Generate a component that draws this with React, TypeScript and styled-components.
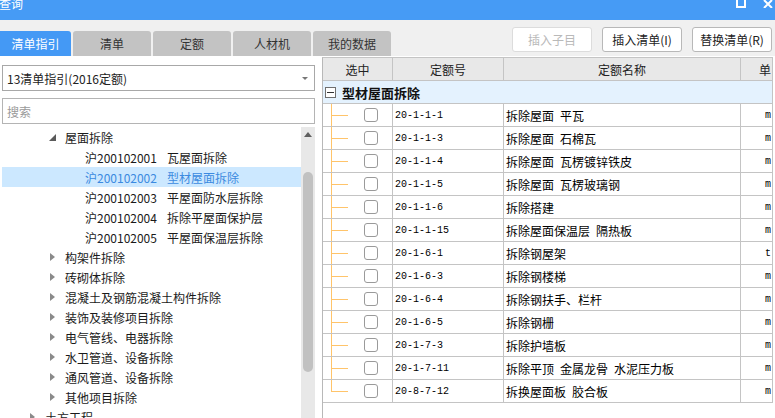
import styled, { createGlobalStyle } from 'styled-components';

const GlobalStyle = createGlobalStyle`
	html, body {
		margin: 0;
		padding: 0;
		background: #f0f0f0;
	}
	body {
		font-family: 'Noto Sans CJK SC', 'Noto Sans', sans-serif;
		color: #1a1a1a;
	}
`;

const TABS = ['清单指引', '清单', '定额', '人材机', '我的数据'];

type TreeNode = {
	level: number;
	code?: string;
	label: string;
	toggle?: 'open' | 'closed';
	selected?: boolean;
};

const TREE: TreeNode[] = [
	{ level: 2, label: '屋面拆除', toggle: 'open' },
	{ level: 3, code: '沪200102001', label: '瓦屋面拆除' },
	{ level: 3, code: '沪200102002', label: '型材屋面拆除', selected: true },
	{ level: 3, code: '沪200102003', label: '平屋面防水层拆除' },
	{ level: 3, code: '沪200102004', label: '拆除平屋面保护层' },
	{ level: 3, code: '沪200102005', label: '平屋面保温层拆除' },
	{ level: 2, label: '构架件拆除', toggle: 'closed' },
	{ level: 2, label: '砖砌体拆除', toggle: 'closed' },
	{ level: 2, label: '混凝土及钢筋混凝土构件拆除', toggle: 'closed' },
	{ level: 2, label: '装饰及装修项目拆除', toggle: 'closed' },
	{ level: 2, label: '电气管线、电器拆除', toggle: 'closed' },
	{ level: 2, label: '水卫管道、设备拆除', toggle: 'closed' },
	{ level: 2, label: '通风管道、设备拆除', toggle: 'closed' },
	{ level: 2, label: '其他项目拆除', toggle: 'closed' },
	{ level: 1, label: '土方工程', toggle: 'closed' },
];

const ROWS: [string, string, string][] = [
	['20-1-1-1', '拆除屋面\u2002平瓦', 'm'],
	['20-1-1-3', '拆除屋面\u2002石棉瓦', 'm'],
	['20-1-1-4', '拆除屋面\u2002瓦楞镀锌铁皮', 'm'],
	['20-1-1-5', '拆除屋面\u2002瓦楞玻璃钢', 'm'],
	['20-1-1-6', '拆除搭建', 'm'],
	['20-1-1-15', '拆除屋面保温层\u2002隔热板', 'm'],
	['20-1-6-1', '拆除钢屋架', 't'],
	['20-1-6-3', '拆除钢楼梯', 'm'],
	['20-1-6-4', '拆除钢扶手、栏杆', 'm'],
	['20-1-6-5', '拆除钢栅', 'm'],
	['20-1-7-3', '拆除护墙板', 'm'],
	['20-1-7-11', '拆除平顶\u2002金属龙骨\u2002水泥压力板', 'm'],
	['20-8-7-12', '拆换屋面板\u2002胶合板', 'm'],
];

function OpenArrow() {
	return (
		<svg width="7" height="7" viewBox="0 0 7 7">
			<path d="M7 0 L7 7 L0 7 Z" fill="#5a5a5a" />
		</svg>
	);
}

function ClosedArrow() {
	return (
		<svg width="5" height="8" viewBox="0 0 5 8">
			<path d="M0 0 L5 4 L0 8 Z" fill="#8a8a8a" />
		</svg>
	);
}

// orange tree connector in the first column
function Connector({ last }: { last: boolean }) {
	return (
		<svg width="26" height="22" viewBox="0 0 26 22">
			<rect x="8" y="0" width="1" height={last ? 12 : 22} fill="#ffc46a" />
			<rect x="8" y="11" width="17" height="1" fill="#ffc46a" />
		</svg>
	);
}

export default function App() {
	return (
		<Page>
			<GlobalStyle />
			<TitleBar>
				<Title>查询</Title>
				<WindowIcons>
					<svg width="10" height="8" viewBox="0 0 10 8">
						<path d="M1 -1 H9 V7 H1 Z" fill="none" stroke="#fff" strokeWidth="2" />
					</svg>
					<svg width="10" height="8" viewBox="0 0 10 8">
						<path d="M1 0 L9 8 M9 0 L1 8" stroke="#fff" strokeWidth="2" />
					</svg>
				</WindowIcons>
			</TitleBar>

			<Toolbar>
				<Tabs>
					{TABS.map((tab, index) => (
						<Tab key={tab} $active={index === 0} $first={index === 0}>
							{tab}
						</Tab>
					))}
				</Tabs>
				<Actions>
					<ActionButton disabled>插入子目</ActionButton>
					<ActionButton>插入清单(I)</ActionButton>
					<ActionButton>替换清单(R)</ActionButton>
				</Actions>
			</Toolbar>

			<Main>
				<LeftPanel>
					<Combo>
						<span>13清单指引(2016定额)</span>
						<svg width="6" height="3" viewBox="0 0 6 3">
							<path d="M0 0 H6 L3 3 Z" fill="#777" />
						</svg>
					</Combo>
					<Search>搜索</Search>
					<TreeArea>
						<TreeList>
							{TREE.map((node, index) => (
								<TreeRow key={index} $level={node.level} $selected={node.selected}>
									<Toggle>
										{node.toggle === 'open' && <OpenArrow />}
										{node.toggle === 'closed' && <ClosedArrow />}
									</Toggle>
									{node.code && <NodeCode>{node.code}</NodeCode>}
									<span>{node.label}</span>
								</TreeRow>
							))}
						</TreeList>
						<Scrollbar>
							<ScrollArrow>
								<svg width="8" height="5" viewBox="0 0 8 5">
									<path d="M0 5 L4 0 L8 5 Z" fill="#606060" />
								</svg>
							</ScrollArrow>
							<ScrollThumb />
						</Scrollbar>
					</TreeArea>
				</LeftPanel>

				<Table>
					<HeaderRow>
						<HeaderCell>选中</HeaderCell>
						<HeaderCell>定额号</HeaderCell>
						<HeaderCell>定额名称</HeaderCell>
						<HeaderCell $align="right">单</HeaderCell>
					</HeaderRow>
					<GroupRow>
						<MinusBox />
						<GroupTitle>型材屋面拆除</GroupTitle>
					</GroupRow>
					{ROWS.map(([code, name, unit], index) => (
						<DataRow key={index}>
							<SelectCell>
								<Connector last={index === ROWS.length - 1} />
								<CheckBox />
							</SelectCell>
							<CodeCell>{code}</CodeCell>
							<NameCell>{name}</NameCell>
							<UnitCell>{unit}</UnitCell>
						</DataRow>
					))}
				</Table>
			</Main>
		</Page>
	);
}

const Page = styled.div`
	width: 775px;
	height: 418px;
	overflow: hidden;
	display: flex;
	flex-direction: column;
	background: #f0f0f0;
`;

const TitleBar = styled.header`
	height: 20px;
	flex: none;
	background: #469bf5;
	display: flex;
	justify-content: space-between;
	overflow: hidden;
`;

const Title = styled.div`
	margin-top: -4px;
	font-size: 12px;
	line-height: 16px;
	color: #fff;
	margin-left: -1px;
`;

const WindowIcons = styled.div`
	display: flex;
	align-items: flex-start;
	gap: 17px;
	padding-right: 2px;
`;

const Toolbar = styled.div`
	height: 36px;
	flex: none;
	display: flex;
	justify-content: space-between;
	align-items: flex-end;
`;

const Tabs = styled.div`
	display: flex;
	gap: 2px;
`;

const Tab = styled.div<{ $active?: boolean; $first?: boolean }>`
	width: ${p => (p.$first ? 71 : 78)}px;
	height: 25px;
	display: flex;
	align-items: center;
	justify-content: center;
	font-size: 12px;
	border-radius: ${p => (p.$first ? '0 3px 0 0' : '3px 3px 0 0')};
	background: ${p => (p.$active ? '#4499f5' : '#c3c3c3')};
	color: ${p => (p.$active ? '#fff' : '#333')};
`;

const Actions = styled.div`
	display: flex;
	gap: 10px;
	padding: 0 3px 4px 0;
`;

const ActionButton = styled.button`
	width: 80px;
	height: 25px;
	padding: 0;
	font-family: 'Noto Sans CJK SC', 'Noto Sans', sans-serif;
	font-size: 12px;
	color: #222;
	background: #fff;
	border: 1px solid #b8b8b8;
	border-radius: 3px;

	&:disabled {
		color: #b9b9b9;
		border-color: #dcdcdc;
	}
`;

const Main = styled.div`
	flex: 1;
	display: flex;
	gap: 5px;
	background: #fff;
	min-height: 0;
`;

const LeftPanel = styled.div`
	width: 317px;
	flex: none;
	display: flex;
	flex-direction: column;
	padding: 9px 0 0 2px;
	box-sizing: border-box;
	min-height: 0;
`;

const Combo = styled.div`
	width: 313px;
	height: 26px;
	box-sizing: border-box;
	border: 1px solid #a8a8a8;
	display: flex;
	align-items: center;
	justify-content: space-between;
	padding: 0 6px 0 4px;
	font-size: 12px;
	color: #222;
`;

const Search = styled.div`
	margin-top: 7px;
	width: 313px;
	height: 26px;
	box-sizing: border-box;
	border: 1px solid #b4b4b4;
	display: flex;
	align-items: center;
	padding-left: 4px;
	font-size: 12px;
	color: #9a9a9a;
`;

const TreeArea = styled.div`
	margin-top: 3px;
	flex: 1;
	display: flex;
	min-height: 0;
	overflow: hidden;
`;

const TreeList = styled.div`
	width: 299px;
	flex: none;
`;

const TreeRow = styled.div<{ $level: number; $selected?: boolean }>`
	height: 20px;
	display: flex;
	align-items: center;
	padding-left: ${p => p.$level * 20 + 3}px;
	font-size: 12px;
	white-space: nowrap;
	background: ${p => (p.$selected ? '#cce8ff' : 'transparent')};
	color: ${p => (p.$selected ? '#3b8ae0' : '#1a1a1a')};
`;

const Toggle = styled.span`
	width: 14px;
	margin-right: 6px;
	flex: none;
	display: flex;
	align-items: center;
	justify-content: center;
`;

const NodeCode = styled.span`
	margin-right: 10px;
`;

const Scrollbar = styled.div`
	width: 14px;
	flex: none;
	background: #e8e8e8;
	display: flex;
	flex-direction: column;
	align-items: center;
`;

const ScrollArrow = styled.div`
	height: 14px;
	display: flex;
	align-items: center;
	justify-content: center;
`;

const ScrollThumb = styled.div`
	margin-top: 31px;
	width: 10px;
	height: 200px;
	border-radius: 5px;
	background: #c1c1c1;
`;

const Table = styled.div`
	margin-top: 1px;
	width: 451px;
	flex: none;
	box-sizing: border-box;
	border-left: 1px solid #b8b8b8;
	border-top: 1px solid #c4c4c4;
	overflow: hidden;
`;

const Row = styled.div`
	display: grid;
	grid-template-columns: 70px 111px 237px 32px;
	height: 23px;
	box-sizing: border-box;
	border-bottom: 1px solid #c4c4c4;
`;

const HeaderRow = styled(Row)`
	background: #e8e8e8;
`;

const HeaderCell = styled.div<{ $align?: 'right' }>`
	display: flex;
	align-items: center;
	justify-content: ${p => (p.$align === 'right' ? 'flex-end' : 'center')};
	padding-right: ${p => (p.$align === 'right' ? '1px' : '0')};
	border-right: 1px solid #c4c4c4;
	font-size: 12px;
	color: #222;
	overflow: hidden;
`;

const GroupRow = styled.div`
	height: 23px;
	box-sizing: border-box;
	border-bottom: 1px solid #c4c4c4;
	border-right: 1px solid #c4c4c4;
	background: #e4f2fe;
	display: flex;
	align-items: center;
	padding-left: 2px;
`;

const MinusBox = styled.div`
	width: 11px;
	height: 11px;
	box-sizing: border-box;
	border: 1px solid #6f6f6f;
	background: #fff;
	display: flex;
	align-items: center;
	justify-content: center;

	&::after {
		content: '';
		width: 7px;
		height: 1px;
		background: #333;
	}
`;

const GroupTitle = styled.span`
	margin-left: 6px;
	font-size: 13px;
	font-weight: 700;
	color: #111;
`;

const DataRow = styled(Row)`
	background: #fff;
`;

const Cell = styled.div`
	display: flex;
	align-items: center;
	border-right: 1px solid #c4c4c4;
	overflow: hidden;
	white-space: pre;
`;

const SelectCell = styled(Cell)`
	svg {
		flex: none;
	}
`;

const CheckBox = styled.span`
	margin-left: 15px;
	width: 14px;
	height: 14px;
	flex: none;
	box-sizing: border-box;
	border: 1px solid #9a9a9a;
	border-radius: 3px;
	background: #fff;
`;

const CodeCell = styled(Cell)`
	padding-left: 2px;
	font-family: 'Liberation Mono', 'DejaVu Sans Mono', monospace;
	font-size: 10px;
	color: #000;
`;

const NameCell = styled(Cell)`
	padding-left: 2px;
	font-size: 12px;
	color: #000;
`;

const UnitCell = styled(Cell)`
	justify-content: flex-end;
	padding-right: 1px;
	font-family: 'Liberation Mono', 'DejaVu Sans Mono', monospace;
	font-size: 10px;
	color: #000;
`;
